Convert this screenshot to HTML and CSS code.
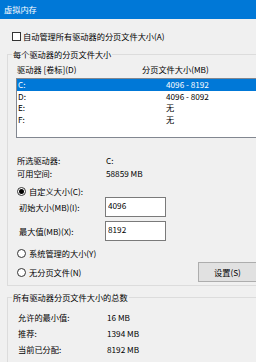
FILE: index.html
```html
<!DOCTYPE html>
<html lang="zh-CN">
<head>
    <meta charset="UTF-8">
    <meta name="viewport" content="width=device-width, initial-scale=1.0">
    <title>虚拟内存</title>
    <link rel="stylesheet" href="styles.css">
</head>
<body>
    <div class="window">
        <div class="titlebar">虚拟内存</div>
        <div class="content">
            <label class="check-row"><span class="checkbox"></span>自动管理所有驱动器的分页文件大小(A)</label>

            <fieldset class="group group-drives">
                <legend>每个驱动器的分页文件大小</legend>
                <div class="cols">
                    <span class="col-drive">驱动器 [卷标](D)</span>
                    <span>分页文件大小(MB)</span>
                </div>
                <ul class="drive-list">
                    <li class="selected"><span class="drive">C:</span><span>4096 - 8192</span></li>
                    <li><span class="drive">D:</span><span>4096 - 8092</span></li>
                    <li><span class="drive">E:</span><span>无</span></li>
                    <li><span class="drive">F:</span><span>无</span></li>
                </ul>

                <div class="info">
                    <span>所选驱动器:</span><span>C:</span>
                    <span>可用空间:</span><span>58859 MB</span>
                </div>

                <label class="radio-row first-radio"><span class="radio checked"></span>自定义大小(C):</label>
                <div class="field-row">
                    <span class="field-label">初始大小(MB)(I):</span>
                    <input class="field" type="text" value="4096">
                </div>
                <div class="field-row second-field">
                    <span class="field-label">最大值(MB)(X):</span>
                    <input class="field" type="text" value="8192">
                </div>
                <label class="radio-row system-radio"><span class="radio"></span>系统管理的大小(Y)</label>
                <div class="button-row">
                    <label class="radio-row"><span class="radio"></span>无分页文件(N)</label>
                    <button class="btn">设置(S)</button>
                </div>
            </fieldset>

            <fieldset class="group group-total">
                <legend>所有驱动器分页文件大小的总数</legend>
                <div class="totals">
                    <span>允许的最小值:</span><span>16 MB</span>
                    <span>推荐:</span><span>1394 MB</span>
                    <span>当前已分配:</span><span>8192 MB</span>
                </div>
            </fieldset>
        </div>
    </div>
</body>
</html>
```

FILE: styles.css
```css
html, body {
    margin: 0;
    padding: 0;
    overflow: hidden;
}
body {
    font-family: "Noto Sans CJK SC", "Noto Sans", sans-serif;
    font-size: 8.2px;
    color: #000;
    background-color: #f0f0f0;
}
.window {
    width: 256px;
    height: 362px;
    overflow: hidden;
    background-color: #f0f0f0;
}
.titlebar {
    height: 19px;
    line-height: 19px;
    padding-left: 4px;
    background-color: #0078d7;
    color: #fff;
}
.content {
    padding-left: 7px;
}
.check-row {
    display: flex;
    align-items: center;
    height: 12px;
    margin-top: 11px;
    padding-left: 5px;
}
.checkbox {
    width: 9px;
    height: 9px;
    box-sizing: border-box;
    border: 1px solid #333;
    background: #fff;
    margin-right: 2px;
}
/* group boxes run past the right edge of the dialog crop, so no right border */
.group {
    margin: 0;
    padding: 0 0 0 8px;
    border: 1px solid #dcdcdc;
    border-right: none;
    min-width: 0;
}
.group legend {
    padding: 0 1px;
    margin-left: -4px;
    line-height: 12px;
}
.group-drives {
    margin-top: 6px;
    padding-top: 3px;
    padding-bottom: 3px;
}
.cols {
    display: flex;
    line-height: 12px;
    padding-left: 1px;
}
.col-drive {
    width: 125px;
}
.drive-list {
    list-style: none;
    margin: 3px 0 0 0;
    padding: 0 0 12px 0;
    height: 46px;
    border: 1px solid #828790;
    border-right: none;
    background: #fff;
}
.drive-list li {
    display: flex;
    height: 11.5px;
    line-height: 11.5px;
    padding-left: 1px;
}
.drive-list li.selected {
    background-color: #0078d7;
    color: #fff;
}
.drive {
    width: 148px;
}
.info {
    display: grid;
    grid-template-columns: 89px auto;
    line-height: 13px;
    margin-top: 16px;
    padding-left: 1px;
}
.radio-row {
    display: flex;
    align-items: center;
    height: 12px;
    padding-left: 1px;
}
.first-radio {
    margin-top: 5px;
}
.system-radio {
    margin-top: 6px;
}
.radio {
    width: 9px;
    height: 9px;
    box-sizing: border-box;
    border: 1px solid #333;
    border-radius: 50%;
    background: #fff;
    margin-right: 3px;
    display: flex;
    align-items: center;
    justify-content: center;
}
.radio.checked::after {
    content: "";
    width: 5px;
    height: 5px;
    border-radius: 50%;
    background: #000;
}
.field-row {
    display: flex;
    align-items: center;
    height: 20px;
}
.second-field {
    margin-top: 4px;
}
.field-label {
    width: 86px;
    padding-left: 3px;
}
.field {
    width: 61px;
    height: 20px;
    box-sizing: border-box;
    border: 1px solid #7a7a7a;
    background: #fff;
    font: inherit;
    line-height: 12px;
    padding: 1px 2px 5px 2px;
    margin: 0;
    outline: none;
}
.button-row {
    display: flex;
    align-items: center;
    justify-content: space-between;
    height: 20px;
    margin-top: 3px;
}
.btn {
    width: 58px;
    height: 20px;
    margin: 0;
    border: 1px solid #adadad;
    border-right: none;
    background-color: #e1e1e1;
    font: inherit;
    color: #000;
    padding: 0;
}
.group-total {
    margin-top: 5px;
    padding-top: 6px;
    height: 80px;
}
.totals {
    display: grid;
    grid-template-columns: 89px auto;
    line-height: 16px;
    padding-left: 2px;
}
```
